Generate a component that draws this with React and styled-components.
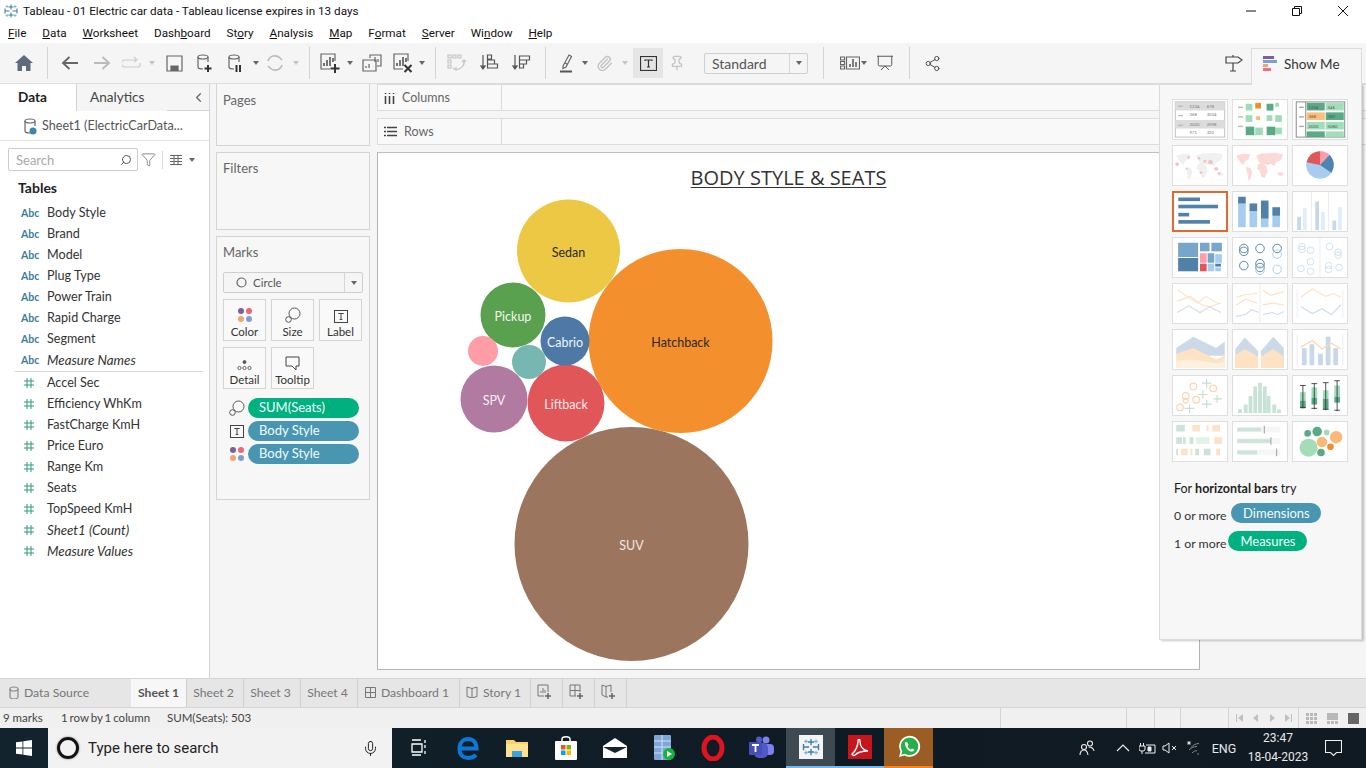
import styled, { createGlobalStyle } from "styled-components";
import { Search, Filter, ChevronLeft, Share2, Mic, Presentation, Paperclip, Pin } from "lucide-react";

const UI = `Lato, "Open Sans", sans-serif`;
const SEGOE = `Roboto, "Open Sans", sans-serif`;

const GlobalStyle = createGlobalStyle`
  html, body { margin: 0; padding: 0; background: #fff; }
  * { box-sizing: border-box; }
`;

const Page = styled.div`
  position: relative;
  width: 1366px;
  height: 768px;
  overflow: hidden;
  display: flex;
  flex-direction: column;
  font-family: ${UI};
  color: #333;
`;

const TitleBar = styled.div`
  height: 22px;
  display: flex;
  align-items: center;
  padding-left: 3px;
  background: #fff;
  font-family: ${SEGOE};
  font-size: 11.7px;
  color: #111;
  gap: 4px;
`;

const WindowButtons = styled.div`
  margin-left: auto;
  display: flex;
  align-items: center;
`;

const WindowButton = styled.div`
  width: 46px;
  height: 22px;
  display: flex;
  align-items: center;
  justify-content: center;
`;

const MenuBar = styled.div`
  height: 21px;
  display: flex;
  align-items: center;
  padding-left: 8px;
  gap: 16px;
  background: #fff;
  font-family: ${SEGOE};
  font-size: 11.7px;
  color: #111;
  u { text-underline-offset: 1px; }
`;

const Toolbar = styled.div`
  height: 41px;
  flex: none;
  display: flex;
  align-items: center;
  padding: 0 117px 0 8px;
  background: #f5f5f5;
  border-bottom: 1px solid #dcdcdc;
`;

const Tool = styled.div`
  width: ${(p) => p.$w}px;
  height: 30px;
  flex: none;
  display: flex;
  align-items: center;
  justify-content: center;
  background: ${(p) => (p.$active ? "#e5e5e5" : "transparent")};
`;

const Sep = styled.div`
  width: 1px;
  height: 32px;
  flex: none;
  margin: 0 ${(p) => p.$r}px 0 ${(p) => p.$l}px;
  background: #d4d4d4;
`;

const Caret = styled.div`
  width: 0;
  height: 0;
  border-left: 3.5px solid transparent;
  border-right: 3.5px solid transparent;
  border-top: 4px solid ${(p) => (p.$faded ? "#c4c4c4" : "#666")};
`;

const Select = styled.div`
  height: ${(p) => p.$h}px;
  width: ${(p) => p.$w}px;
  flex: none;
  margin-left: ${(p) => p.$ml || 0}px;
  display: flex;
  align-items: center;
  background: #f5f5f5;
  border: 1px solid #cfcfcf;
  border-radius: 2px;
  font-size: ${(p) => p.$size}px;
  color: #555;
`;

const SelectLabel = styled.div`
  flex: 1;
  display: flex;
  align-items: center;
  gap: 6px;
  padding-left: ${(p) => p.$pl}px;
`;

const SelectArrow = styled.div`
  width: 18px;
  height: 100%;
  display: flex;
  align-items: center;
  justify-content: center;
  border-left: 1px solid #d6d6d6;
`;

const Spring = styled.div`
  flex: 1;
`;

const Main = styled.div`
  height: 594px;
  flex: none;
  display: flex;
  background: #f5f5f5;
`;

const DataPane = styled.div`
  width: 210px;
  flex: none;
  background: #fff;
  border-right: 1px solid #d4d4d4;
  display: flex;
  flex-direction: column;
`;

const PaneTabs = styled.div`
  height: 27px;
  display: flex;
  align-items: center;
  border-bottom: 1px solid #d4d4d4;
  font-size: 13.6px;
  line-height: 24px;
`;

const PaneTab = styled.div`
  width: ${(p) => p.$w}px;
  height: 27px;
  display: flex;
  align-items: center;
  padding-bottom: 1px;
  background: ${(p) => (p.$active ? "#fff" : "#f5f5f5")};
  margin-bottom: ${(p) => (p.$active ? "-1px" : "0")};
  padding-left: ${(p) => p.$pl}px;
  font-weight: ${(p) => (p.$active ? 700 : 400)};
  color: ${(p) => (p.$active ? "#222" : "#444")};
  border-right: ${(p) => (p.$active ? "1px solid #d4d4d4" : "none")};
`;

const CollapseBox = styled.div`
  flex: 1;
  height: 26px;
  background: #f5f5f5;
  display: flex;
  align-items: center;
  justify-content: flex-end;
  padding-right: 3px;
`;

const SourceRow = styled.div`
  height: 30px;
  display: flex;
  align-items: center;
  gap: 5px;
  padding-left: 23px;
  font-size: 12.6px;
  color: #555;
  border-bottom: 1px solid #e2e2e2;
`;

const SearchRow = styled.div`
  height: 35px;
  display: flex;
  align-items: center;
  padding: 2px 0 0 8px;
`;

const SearchBox = styled.div`
  width: 130px;
  height: 23px;
  display: flex;
  align-items: center;
  justify-content: space-between;
  padding: 0 5px 0 7px;
  border: 1px solid #ccc;
  border-radius: 2px;
  font-size: 13px;
  color: #aaa;
`;

const SearchTools = styled.div`
  display: flex;
  align-items: center;
  gap: 6px;
  margin-left: 3px;
`;

const VRule = styled.div`
  width: 1px;
  height: 18px;
  background: #dcdcdc;
`;

const TablesHead = styled.div`
  height: 20px;
  margin-top: 1px;
  padding-left: 18px;
  font-size: 14px;
  font-weight: 700;
  color: #222;
  display: flex;
  align-items: center;
`;

const FieldList = styled.div`
  padding-top: 5px;
`;

const FieldRow = styled.div`
  height: 21px;
  display: flex;
  align-items: center;
  font-size: ${(p) => (p.$calc ? 13.3 : 12.6)}px;
  color: #333;
  font-style: ${(p) => (p.$calc ? "italic" : "normal")};
`;

const FieldType = styled.span`
  width: 47px;
  flex: none;
  display: flex;
  padding-left: ${(p) => (p.$num ? 23 : 21)}px;
  font-size: 10.5px;
  font-style: normal;
  font-weight: 700;
  color: #3d7d9c;
`;

const FieldRule = styled.div`
  height: 1px;
  margin: 1px 6px 0 15px;
  background: #d8d8d8;
`;

const CardsColumn = styled.div`
  width: 166px;
  flex: none;
  padding: 0 6px 0 6px;
  display: flex;
  flex-direction: column;
  gap: 6px;
`;

const Card = styled.div`
  height: ${(p) => p.$h}px;
  flex: none;
  padding: ${(p) => (p.$flush ? 8 : 7)}px 6px 0 6px;
  background: #f7f7f7;
  border: 1px solid #d4d4d4;
  border-top: ${(p) => (p.$flush ? "none" : "1px solid #d4d4d4")};
  font-size: 13px;
  color: #666;
`;

const MarksType = styled.div`
  margin-top: 12px;
`;

const MarkGrid = styled.div`
  display: grid;
  grid-template-columns: repeat(3, 43px);
  grid-auto-rows: 42px;
  column-gap: 5px;
  row-gap: 6px;
  margin-top: 6px;
`;

const MarkButton = styled.div`
  background: #f9f9f9;
  border: 1px solid #d4d4d4;
  display: flex;
  flex-direction: column;
  align-items: center;
  justify-content: flex-end;
  gap: 2px;
  padding-bottom: 2px;
  font-size: 11.5px;
  color: #333;
`;

const PillList = styled.div`
  display: flex;
  flex-direction: column;
  gap: 3px;
  margin-top: 9px;
`;

const PillRow = styled.div`
  display: flex;
  align-items: center;
  height: 20px;
  gap: 3px;
  padding-left: 6px;
`;

const PillIcon = styled.div`
  width: 16px;
  display: flex;
  justify-content: center;
`;

const Pill = styled.div`
  width: ${(p) => p.$w || 111}px;
  height: 20px;
  border-radius: 10px;
  display: flex;
  align-items: center;
  padding: 0 0 2px 11px;
  font-size: 13px;
  color: #f2fbff;
  background: ${(p) => (p.$measure ? "#00b180" : "#4996b2")};
`;

const VizColumn = styled.div`
  flex: 1;
  display: flex;
  flex-direction: column;
  padding-left: 1px;
`;

const Shelf = styled.div`
  height: 27px;
  flex: none;
  margin-bottom: ${(p) => p.$mb}px;
  background: #f9f9f9;
  border-top: 1px solid #dcdcdc;
  border-bottom: 1px solid #dcdcdc;
  border-left: 1px solid #dcdcdc;
`;

const ShelfLabel = styled.div`
  width: 124px;
  height: 100%;
  display: flex;
  align-items: center;
  gap: ${(p) => p.$gap}px;
  padding-left: 6px;
  border-right: 1px solid #dcdcdc;
  font-size: 12.5px;
  color: #666;
`;

const Canvas = styled.div`
  width: 823px;
  height: 518px;
  flex: none;
  background: #fff;
  border: 1px solid #b4b4b4;
  border-top-color: #c0c0c0;
`;

const ChartTitle = styled.div`
  height: 38px;
  padding: 13px 0 0 0;
  text-align: center;
  font-family: "Open Sans", sans-serif;
  font-size: 20px;
  font-weight: 500;
  line-height: 24px;
  text-decoration: underline;
  text-decoration-thickness: 1px;
  text-underline-offset: 2px;
  color: #333;
`;

const Chart = styled.svg`
  display: block;
  width: 821px;
  height: 478px;
  font-family: ${UI};
`;

const ShowMeTab = styled.div`
  position: absolute;
  left: 1251px;
  top: 48px;
  width: 111px;
  height: 37px;
  z-index: 3;
  background: #f7f7f7;
  border: 1px solid #dcdcdc;
  border-bottom: none;
  display: flex;
  align-items: center;
  gap: 6px;
  padding: 0 0 7px 11px;
  font-size: 13.5px;
  color: #333;
`;

const ShowMePanel = styled.div`
  position: absolute;
  left: 1159px;
  top: 84px;
  width: 203px;
  height: 556px;
  z-index: 2;
  padding: 14px 0 0 12px;
  background: #f7f7f7;
  border: 1px solid #dcdcdc;
  box-shadow: 2px 1px 2px rgba(0, 0, 0, 0.22);
`;

const ThumbGrid = styled.div`
  display: grid;
  grid-template-columns: repeat(3, 56px);
  grid-auto-rows: 41px;
  column-gap: 4px;
  row-gap: 5px;
`;

const Thumb = styled.div`
  background: #fff;
  border: ${(p) => (p.$active ? "2px solid #e0692f" : "1px solid #dedede")};
  overflow: hidden;
  svg {
    display: block;
    width: 100%;
    height: 100%;
  }
`;

const HintTitle = styled.div`
  margin: 19px 0 0 2px;
  height: 16px;
  font-size: 12.5px;
  color: #222;
`;

const HintRow = styled.div`
  display: flex;
  align-items: center;
  margin: ${(p) => p.$mt}px 0 0 2px;
  height: 20px;
  gap: ${(p) => p.$gap}px;
  font-size: 12.3px;
  color: #333;
`;

const HintPill = styled(Pill)`
  justify-content: center;
  padding: 0 0 1px 0;
  margin-bottom: 4px;
`;

const SheetTabs = styled.div`
  height: 30px;
  flex: none;
  display: flex;
  background: #e6e6e6;
  border-top: 1px solid #d4d4d4;
  border-bottom: 1px solid #d4d4d4;
  font-size: 12.2px;
  color: #777;
`;

const SheetTab = styled.div`
  width: ${(p) => p.$w}px;
  display: flex;
  align-items: center;
  justify-content: ${(p) => (p.$plain ? "flex-start" : "center")};
  padding: ${(p) => (p.$plain ? "0 0 2px 9px" : p.$active ? "0 0 2px 0" : "0 3px 2px 0")};
  gap: 5px;
  flex: none;
  background: ${(p) => (p.$active ? "#f7f7f7" : "transparent")};
  font-weight: ${(p) => (p.$active ? 700 : 400)};
  color: ${(p) => (p.$active ? "#555" : "#777")};
  border-right: ${(p) => (p.$plain ? "none" : "1px solid #d0d0d0")};
`;

const StatusBar = styled.div`
  height: 20px;
  flex: none;
  display: flex;
  align-items: center;
  background: #f0f0f0;
  font-size: 11.5px;
  color: #444;
`;

const StatusText = styled.div`
  width: ${(p) => p.$w}px;
  flex: none;
  padding-left: ${(p) => p.$pl}px;
  padding-bottom: 2px;
  word-spacing: ${(p) => p.$ws || 0}px;
`;

const StatusCell = styled.div`
  width: ${(p) => p.$w}px;
  height: 100%;
  flex: none;
  display: flex;
  align-items: center;
  justify-content: center;
  gap: ${(p) => p.$gap || 0}px;
  border-left: 1px solid #d4d4d4;
`;

const Taskbar = styled.div`
  height: 40px;
  flex: none;
  display: flex;
  align-items: center;
  background: linear-gradient(90deg, #13232d, #0f1b24 60%, #101a22);
  color: #fff;
`;

const StartButton = styled.div`
  width: 48px;
  height: 40px;
  flex: none;
  display: flex;
  align-items: center;
  justify-content: center;
`;

const SearchBar = styled.div`
  width: 344px;
  height: 40px;
  flex: none;
  display: flex;
  align-items: center;
  padding: 0 13px 0 9px;
  background: #f2f2f2;
  color: #222;
  font-family: ${SEGOE};
  font-size: 15px;
`;

const SearchRing = styled.div`
  width: 22px;
  height: 22px;
  border-radius: 50%;
  border: 3px solid #111;
  margin-right: 9px;
  box-shadow: 0 0 2px #666;
`;

const SearchText = styled.div`
  flex: 1;
`;

const AppIcons = styled.div`
  display: flex;
  height: 40px;
  margin-left: 2px;
`;

const AppIcon = styled.div`
  width: 49px;
  height: 40px;
  flex: none;
  display: flex;
  align-items: center;
  justify-content: center;
  background: ${(p) => p.$bg || "transparent"};
  border-bottom: ${(p) => (p.$line ? `2px solid ${p.$line}` : "none")};
`;

const Tray = styled.div`
  margin-left: auto;
  display: flex;
  align-items: center;
  height: 40px;
  padding-right: 16px;
`;

const TrayItem = styled.div`
  width: ${(p) => p.$w}px;
  flex: none;
  display: flex;
  align-items: center;
  justify-content: center;
  font-family: ${SEGOE};
  font-size: 12.5px;
  color: #e8e8e8;
`;

const Clock = styled.div`
  width: 60px;
  flex: none;
  margin: 0 8px 0 5px;
  white-space: nowrap;
  display: flex;
  flex-direction: column;
  align-items: center;
  font-family: ${SEGOE};
  font-size: 12px;
  line-height: 19px;
  color: #e8e8e8;
`;

const I = ({ w = 20, h = 20, children, stroke = "#666", sw = 1.2 }) => (
  <svg width={w} height={h} viewBox={`0 0 ${w} ${h}`} fill="none" stroke={stroke} strokeWidth={sw}>
    {children}
  </svg>
);

const Cylinder = ({ c = "#666" }) => (
  <>
    <ellipse cx="7" cy="4" rx="5" ry="2" stroke={c} />
    <path d="M2 4v10c0 1.2 2 2 5 2M12 4v5" stroke={c} />
  </>
);

const TableauLogo = ({ size = 16 }) => (
  <svg width={size} height={size} viewBox="0 0 16 16" stroke="#3a7fae" strokeWidth="1.1">
    <path d="M8 1.5v5M5.5 4h5M8 9.5v5M5.5 12h5M1.5 8h5M2 5.5v5M9.5 8h5M14 5.5v5" />
    <path d="M4 2v3M2.5 3.5h3M12 2v3M10.5 3.5h3M4 11v3M2.5 12.5h3M12 11v3M10.5 12.5h3" stroke="#7fb2d2" strokeWidth=".9" />
  </svg>
);

const ColorDots = ({ scale = 1 }) => (
  <svg width={16 * scale} height={16 * scale} viewBox="0 0 16 16">
    <circle cx="4" cy="4" r="3" fill="#7b6195" />
    <circle cx="12" cy="4" r="3" fill="#f0647a" />
    <circle cx="4" cy="12" r="3" fill="#f5a46f" />
    <circle cx="12" cy="12" r="3" fill="#7d9fcd" />
  </svg>
);

const SizeIcon = () => (
  <svg width="16" height="16" viewBox="0 0 16 16" fill="none" stroke="#555">
    <circle cx="9.5" cy="6.5" r="5.5" fill="#f9f9f9" />
    <circle cx="3.5" cy="12.5" r="2.8" fill="#f9f9f9" />
  </svg>
);

const TextBox = () => (
  <svg width="14" height="13" viewBox="0 0 14 13" fill="none" stroke="#444">
    <rect x=".5" y=".5" width="13" height="12" />
    <path d="M4.5 4V3.5h5V4M7 3.5v6M5.7 9.5h2.6" />
  </svg>
);

const BarChartSmall = ({ children }) => (
  <I w={22} h={22}>
    <path d="M16 9V2H2v15h9" />
    <path d="M5 14v-3M8 14V8M11 14V5M14 10V6" strokeWidth="1.6" stroke="#555" />
    {children}
  </I>
);

const SortIcon = ({ rev }) => (
  <I w={20} h={20} stroke="#555">
    <path d="M4 2v13M1.5 12.5L4 16l2.5-3.5" fill="#555" />
    {rev ? (
      <path d="M8.5 3h10v4h-10zM8.5 7h7v4h-7zM8.5 11h4v4h-4z" />
    ) : (
      <path d="M8.5 2h4v4h-4zM8.5 7h7v4h-7zM8.5 11h10v4h-10z" />
    )}
  </I>
);

const HashIcon = () => (
  <svg width="12" height="12" viewBox="0 0 12 12" stroke="#2f9b78" strokeWidth="1">
    <path d="M4 1v10M8 1v10M1 4h10M1 8h10" />
  </svg>
);

const circles = [
  { name: "SUV", cx: 631.5, cy: 544, r: 117, fill: "#9c755f", text: "#f0e8e0" },
  { name: "Hatchback", cx: 680.5, cy: 341, r: 92, fill: "#f48f2d", text: "#2a2a2a" },
  { name: "Sedan", cx: 568.5, cy: 251, r: 51.5, fill: "#ecc845", text: "#2a2a2a" },
  { name: "Liftback", cx: 566, cy: 403, r: 38.5, fill: "#e15759", text: "#f8e8e8" },
  { name: "SPV", cx: 494, cy: 399, r: 33.5, fill: "#b07aa1", text: "#f8eef6" },
  { name: "Pickup", cx: 513, cy: 315, r: 32.5, fill: "#59a14f", text: "#f0f8ee" },
  { name: "Cabrio", cx: 565, cy: 341, r: 24.5, fill: "#4e79a7", text: "#eef4fa" },
  { name: "", cx: 529, cy: 362, r: 17, fill: "#76b7b2", text: "#fff" },
  { name: "", cx: 483, cy: 351, r: 15, fill: "#ff9da7", text: "#fff" },
];

const Bars = ({ items, fill, op = 1 }) =>
  items.map(([x, y, w, h, f], i) => <rect key={i} x={x} y={y} width={w} height={h} fill={f || fill} opacity={op} />);

const Poly = ({ d, c, sw = 1.2, op = 1 }) => <path d={d} fill="none" stroke={c} strokeWidth={sw} opacity={op} />;

const Rings = ({ items, c, sw = 1, op = 1 }) =>
  items.map(([x, y, r], i) => <circle key={i} cx={x} cy={y} r={r} fill="none" stroke={c} strokeWidth={sw} opacity={op} />);

const WORLD = "M3 10l8-2 7 1-2 5-4 2-1 4-3-2-3-4zM13 22l5 1 2 4-2 7-2 3-1-7zM24 10l6-2 14-1 8 2-2 6-5 2-2 4-4-2-3 1-4-1-4 0zM26 19l6 0 3 3 1 5-3 6-3 0-2-6-3-3zM46 28l5-1 2 3-4 2z";

const tableCells = (
  <>
    <rect x="2" y="2" width="52" height="37" fill="none" stroke="#bbb" />
    <Bars fill="#dcdcdc" items={[[2, 2, 52, 9], [2, 21, 52, 9]]} />
    <Bars fill="#aaa" items={[[5, 6, 5, 1], [5, 16, 5, 1], [5, 26, 5, 1]]} />
    {[[17, 8, "1234"], [35, 8, "678"], [17, 17, "368"], [35, 17, "3034"], [17, 27, "2020"], [35, 27, "2598"], [17, 36, "971"], [35, 36, "322"]].map(([x, y, t]) => (
      <text key={t} x={x} y={y} fontSize="4.5" fill="#777" fontFamily="Lato">{t}</text>
    ))}
  </>
);

const thumbs = [
  tableCells,
  <>
    <Bars fill="#bbb" items={[[5, 7, 5, 1.5], [5, 17, 5, 1.5], [5, 27, 5, 1.5]]} />
    <Bars fill="#9fdcb8" items={[[13, 4, 7, 7], [35, 4, 7, 7], [44, 3, 4, 4], [13, 16, 7, 7], [35, 16, 6, 6], [44, 16, 7, 7], [23, 29, 8, 8], [44, 29, 7, 7]]} />
    <Bars fill="#f28e2b" items={[[23, 3, 6, 6]]} />
    <Bars fill="#fdb877" items={[[24, 17, 4, 4]]} />
    <Bars fill="#59ab85" items={[[35, 4, 7, 7], [13, 28, 9, 9], [35, 28, 9, 9]]} />
  </>,
  <>
    <rect x="3" y="2" width="51" height="37" fill="none" stroke="#888" />
    <line x1="13" y1="2" x2="13" y2="39" stroke="#888" />
    <Bars fill="#aaa" items={[[6, 7, 5, 1.5], [6, 17, 5, 1.5], [6, 27, 5, 1.5]]} />
    <Bars fill="#58ab86" items={[[14, 3, 19, 8], [34, 13, 19, 8], [14, 33, 19, 6]]} />
    <Bars fill="#a3debb" items={[[34, 3, 19, 8], [14, 23, 19, 8], [34, 23, 19, 8], [34, 33, 19, 6]]} />
    <Bars fill="#fdbd7d" items={[[14, 13, 19, 8]]} />
    {[[16, 9, "1234"], [36, 9, "546"], [16, 19, "368"], [36, 19, "380"], [16, 29, "2020"], [36, 29, "5080"]].map(([x, y, t]) => (
      <text key={t} x={x} y={y} fontSize="4.5" fill="#555" fontFamily="Lato">{t}</text>
    ))}
  </>,
  <>
    <path d={WORLD} fill="#f0f0f0" />
    {[[4, 19, 2], [16, 12, 1.5], [27, 13, 1.5], [39, 17, 2.5], [29, 28, 1.5], [45, 24, 2], [48, 29, 1.5], [14, 24, 1.2], [33, 16, 1.5]].map(([x, y, r], i) => (
      <circle key={i} cx={x} cy={y} r={r} fill="#f3c3c6" />
    ))}
  </>,
  <path d={WORLD} fill="#fbd9d6" />,
  <>
    <circle cx="28" cy="20" r="14.5" fill="#a6cdee" />
    <path d="M28 20L14 17a14.5 14.5 0 0 1 14-11.5z" fill="#e15759" />
    <path d="M28 20V5.5a14.5 14.5 0 0 1 10 4z" fill="#ff9da7" />
    <path d="M28 20L38 9.5a14.5 14.5 0 0 1 2 18.5z" fill="#4e85b0" />
  </>,
  <Bars fill="#4f81a9" items={[[4, 5, 24, 4], [4, 13, 44, 4], [4, 22, 12, 4], [4, 30, 35, 4]]} />,
  <>
    <Bars fill="#a6cdee" items={[[5, 11, 8, 26], [17, 19, 8, 18], [29, 28, 8, 9], [41, 25, 8, 12]]} />
    <Bars fill="#4f81a9" items={[[5, 5, 8, 7], [17, 12, 8, 8], [29, 9, 8, 19], [41, 16, 8, 9]]} />
  </>,
  <>
    <Poly d="M19 0v41M37 0v41" c="#eee" />
    <Bars fill="#c9d8e8" items={[[4, 26, 4, 14], [23, 10, 4, 30], [41, 30, 4, 10]]} />
    <Bars fill="#e0edfa" items={[[10, 17, 4, 23], [29, 21, 4, 19], [47, 16, 4, 24]]} />
  </>,
  <>
    <Bars fill="#78a6c8" items={[[5, 5, 21, 15], [28, 5, 10, 9], [40, 5, 11, 9]]} />
    <Bars fill="#4f81a9" items={[[5, 21, 21, 14], [44, 27, 6, 3]]} />
    <Bars fill="#a6cdee" items={[[44, 17, 7, 9], [36, 27, 7, 8], [44, 31, 6, 4]]} />
    <Bars fill="#ff9da7" items={[[28, 16, 7, 10]]} />
    <Bars fill="#78a6c8" items={[[36, 16, 7, 10]]} />
    <Bars fill="#e15759" items={[[28, 27, 7, 8]]} />
  </>,
  <>
    <Rings c="#4f81a9" items={[[11, 11, 4.5], [11, 14, 4.5], [28, 11, 4.5], [28, 27, 4.5], [28, 31, 4.5], [11, 29, 4.5], [46, 11, 4.5]]} />
    <Rings c="#a6cdee" items={[[46, 17, 4.5], [46, 33, 4.5], [28, 34, 4.5]]} />
  </>,
  <>
    <Poly d="M28 0v41" c="#eef2f6" />
    <Rings c="#cfe0ee" items={[[9, 9, 3.5], [9, 12, 3.5], [18, 13, 3.5], [18, 25, 3.5], [8, 32, 3.5], [18, 35, 3.5], [38, 9, 3.5], [47, 15, 3.5], [47, 18, 3.5], [37, 29, 3.5], [37, 33, 3.5], [48, 31, 3.5]]} />
  </>,
  <>
    <Poly d="M4 6l12 8 10 6 8-7 14 8" c="#fde4c8" />
    <Poly d="M4 18l14-5 12 9 8 2 12-4" c="#fde4c8" />
    <Poly d="M4 30l12-7 12 7 10-6 12 6" c="#cfdcea" />
  </>,
  <>
    <Poly d="M28 0v41" c="#eee" />
    <Poly d="M3 14l10-3 12-1M3 22l10-6 12 4" c="#fde0c0" />
    <Poly d="M3 34l10-2 6-5 8 3" c="#cfdcea" />
    <Poly d="M31 6l8 6 14-4M31 22l10-2 12 2" c="#fde0c0" />
    <Poly d="M31 32l10-2 6 2 6-3" c="#cfdcea" />
  </>,
  <>
    <Poly d="M4 6v30M52 6v30" c="#f0f0f0" />
    <Poly d="M8 14l12-9 14 8 8-3 8 4" c="#fde4c8" />
    <Poly d="M8 24l12 7 10-5 10 6 10-10" c="#cfdcea" />
  </>,
  <>
    <path d="M3 19l18-12 24 12 9-7v15H3z" fill="#cbd9e8" />
    <path d="M3 25l18-6 24 12 9-4v13H3z" fill="#fde2c4" />
    <path d="M3 32l18-1 24 4 9-2v7H3z" fill="#fef0e0" />
  </>,
  <>
    <path d="M2 20l10-12 14 14v18H2z M29 22l13-15 11 12v21H29z" fill="#cbd9e8" />
    <path d="M2 26l10-6 14 8v12H2z M29 28l13-8 11 8v12H29z" fill="#fde2c4" />
  </>,
  <>
    <Bars fill="#c9d8e8" items={[[9, 19, 5, 18], [17, 15, 5, 22], [26, 25, 5, 12], [34, 7, 5, 30], [42, 19, 5, 18]]} />
    <Poly d="M8 18l12-7 10 9 10-6 10 6" c="#fdd9b0" sw="1.3" />
    <Poly d="M4 5v32M52 5v32" c="#efefef" />
  </>,
  <>
    <Rings c="#fdd5b0" sw="1.3" items={[[21, 11, 3.5], [13, 21, 3.5], [42, 13, 3.5], [7, 33, 3.5], [24, 25, 3.5], [13, 26, 2.5]]} />
    <Poly d="M35 3v9M30 7.5h10M31 15v9M26 19.5h10M46 20v8M42 24h9M35 25v9M30 29.5h10M17 30v9M12 34h10" c="#bfe0d2" />
  </>,
  <Bars fill="#c6e3d5" items={[[5, 35, 4, 4], [11, 30, 4, 9], [16, 21, 4, 18], [21, 11, 4, 28], [26, 7, 4, 32], [31, 11, 4, 28], [35, 21, 4, 18], [41, 30, 4, 9], [46, 35, 4, 4]]} />,
  <>
    <Bars fill="#9fdcb8" items={[[7, 17, 6, 9], [19, 12, 6, 11], [31, 15, 6, 9], [43, 10, 6, 12]]} />
    <Bars fill="#59ab85" items={[[7, 26, 6, 8], [19, 23, 6, 7], [31, 24, 6, 11], [43, 22, 6, 6]]} />
    <Poly d="M10 10v24M7 10h6M7 33h6M22 8v27M19 8h6M19 34h6M34 7v29M31 7h6M31 35h6M46 5v32M43 5h6M43 36h6" c="#333" sw=".9" />
  </>,
  <Bars
    items={[
      [3, 3, 9, 7, "#cce4d8"], [20, 3, 4, 7, "#fde2c8"], [24, 3, 4, 7, "#fde2c8"], [35, 3, 2, 7, "#fde2c8"], [41, 3, 8, 7, "#fde2c8"],
      [3, 16, 6, 7, "#cce4d8"], [10, 16, 3, 7, "#cce4d8"], [17, 16, 4, 7, "#cce4d8"], [24, 16, 14, 7, "#e2f2e9"], [43, 16, 8, 7, "#fde2c8"],
      [3, 28, 2, 7, "#cce4d8"], [8, 28, 7, 7, "#fde2c8"], [18, 28, 2, 7, "#fde2c8"], [23, 28, 4, 7, "#cce4d8"], [32, 28, 7, 7, "#cce4d8"], [45, 28, 4, 7, "#fde2c8"],
    ]}
  />,
  <>
    <Bars fill="#f6f6f6" items={[[4, 5, 45, 6], [4, 17, 45, 6], [4, 29, 45, 6]]} />
    <Bars fill="#cce4d8" items={[[4, 6, 25, 4], [4, 18, 35, 4], [4, 30, 21, 4]]} />
    <Bars fill="#999" items={[[32, 4, 1, 8], [39, 16, 1, 8], [45, 28, 1, 8]]} />
  </>,
  <>
    <circle cx="16" cy="27" r="9.5" fill="#a4dcb9" />
    <circle cx="15" cy="12" r="3.5" fill="#59ab85" />
    <circle cx="25" cy="10" r="5" fill="#59ab85" />
    <circle cx="35" cy="11" r="3" fill="#a4dcb9" />
    <circle cx="45" cy="16" r="6.5" fill="#fdb877" />
    <circle cx="30" cy="21" r="5.5" fill="#fdb877" />
    <circle cx="39" cy="26" r="3.5" fill="#f28e2b" />
    <circle cx="29" cy="32" r="4" fill="#59ab85" />
  </>,
];

const fields = [
  ["Body Style"], ["Brand"], ["Model"], ["Plug Type"], ["Power Train"], ["Rapid Charge"], ["Segment"], ["Measure Names", true],
];
const measures = [
  ["Accel Sec"], ["Efficiency WhKm"], ["FastCharge KmH"], ["Price Euro"], ["Range Km"], ["Seats"], ["TopSpeed KmH"], ["Sheet1 (Count)", true], ["Measure Values", true],
];

const App = () => (
  <Page>
    <GlobalStyle />
    <TitleBar>
      <TableauLogo />
      <span>Tableau - 01 Electric car data - Tableau license expires in 13 days</span>
      <WindowButtons>
        <WindowButton><I w={12} h={12} stroke="#111" sw={1}><path d="M1 6h10" /></I></WindowButton>
        <WindowButton><I w={12} h={12} stroke="#111" sw={1}><path d="M1.5 3.5h7v7h-7zM3.5 3V1.5h7v7H9" /></I></WindowButton>
        <WindowButton><I w={12} h={12} stroke="#111" sw={1}><path d="M1 1l10 10M11 1L1 11" /></I></WindowButton>
      </WindowButtons>
    </TitleBar>
    <MenuBar>
      <span><u>F</u>ile</span><span><u>D</u>ata</span><span><u>W</u>orksheet</span><span>Dash<u>b</u>oard</span><span>St<u>o</u>ry</span><span><u>A</u>nalysis</span><span><u>M</u>ap</span><span>F<u>o</u>rmat</span><span><u>S</u>erver</span><span>Wi<u>n</u>dow</span><span><u>H</u>elp</span>
    </MenuBar>
    <Toolbar>
      <Tool $w={32}>
        <svg width="18" height="16" viewBox="0 0 18 16"><path d="M9 0L0 8h2.5v8H7v-5h4v5h4.5V8H18z" fill="#5f6b7a" /></svg>
      </Tool>
      <Sep $l={7} $r={7} />
      <Tool $w={30}><I w={18} h={16} stroke="#666" sw={1.9}><path d="M17 8H2M8.5 2L2 8l6.5 6" /></I></Tool>
      <Tool $w={34}><I w={18} h={16} stroke="#bbb" sw={1.9}><path d="M1 8h15M9.5 2L16 8l-6.5 6" /></I></Tool>
      <Tool $w={26}><I w={20} h={14} stroke="#ccc"><path d="M14 4H3a2 2 0 0 0 0 7h13a2 2 0 0 0 2-2V7M12 1l3 3-3 2" /></I></Tool>
      <Tool $w={14}><Caret $faded /></Tool>
      <Tool $w={30}><I w={17} h={17}><path d="M1 1h15v15H1z" /><path d="M5 16v-5h7v5" fill="#666" /></I></Tool>
      <Tool $w={32}><I w={18} h={20}><Cylinder /><path d="M12 12v7M8.5 15.5h7" stroke="#333" strokeWidth="2" /></I></Tool>
      <Tool $w={30}><I w={18} h={20}><Cylinder /><path d="M9.5 12v7M13 12v7" stroke="#333" strokeWidth="2" /></I></Tool>
      <Tool $w={10}><Caret /></Tool>
      <Tool $w={28}><I w={18} h={18} stroke="#bbb" sw={1.6}><path d="M2 7a7.2 7.2 0 0 1 12-3l2 2M16 11a7.2 7.2 0 0 1-12 3l-2-2" /></I></Tool>
      <Tool $w={14}><Caret $faded /></Tool>
      <Sep $l={6} $r={6} />
      <Tool $w={28}><BarChartSmall><path d="M16 12v9M11.5 16.5h9" stroke="#333" strokeWidth="2" /></BarChartSmall></Tool>
      <Tool $w={12}><Caret /></Tool>
      <Tool $w={32}><I w={20} h={18}><path d="M8 4V1h11v11h-4" /><path d="M1 6h13v11H1z" fill="#f5f5f5" /><path d="M13 8V3M16 8V5M4 14v-2M7 14v-4" /></I></Tool>
      <Tool $w={30}><BarChartSmall><path d="M12.5 13l7 7M19.5 13l-7 7" stroke="#333" strokeWidth="2" /></BarChartSmall></Tool>
      <Tool $w={8}><Caret /></Tool>
      <Sep $l={9} $r={8} />
      <Tool $w={26}><I w={20} h={18} stroke="#c4c4c4"><path d="M1 1h3v3H1zM6 1h3v3H6zM11 1h3v3h-3zM1 6h3v3H1zM1 11h3v3H1z" /><path d="M17 6c1 5-2 9-8 10M6 14l3 2 0-3M15 8l2-2 2 2" /></I></Tool>
      <Tool $w={38}><SortIcon /></Tool>
      <Tool $w={26}><SortIcon rev /></Tool>
      <Sep $l={11} $r={10} />
      <Tool $w={22}><I w={14} h={20}><path d="M3 13L9 2l2.5 1.5L6 14l-3 1.5zM7 11l-2-1" /><path d="M0 18.500h12" stroke="#555" strokeWidth="2" /></I></Tool>
      <Tool $w={14}><Caret /></Tool>
      <Tool $w={24}><Paperclip size={17} color="#c4c4c4" /></Tool>
      <Tool $w={17}><Caret $faded /></Tool>
      <Tool $w={30} $active><I w={17} h={15} stroke="#333"><rect x=".5" y=".5" width="16" height="14" /><path d="M5 5V4h7v1M8.5 4v7M7 11h3" /></I></Tool>
      <Tool $w={28}><Pin size={16} color="#c4c4c4" /></Tool>
      <Select $w={104} $h={21} $ml={13} $size={14}>
        <SelectLabel $pl={7}>Standard</SelectLabel>
        <SelectArrow><Caret /></SelectArrow>
      </Select>
      <Sep $l={15} $r={16} />
      <Tool $w={20}><I w={20} h={14}><path d="M.5 1h4v3h-4zM.5 5.5h4v3h-4zM.5 10h4v3h-4zM6.5 1h13v12h-13z" /><path d="M10 11V8M13 11V3M16 11V6" stroke="#555" strokeWidth="1.5" /></I></Tool>
      <Tool $w={8}><Caret /></Tool>
      <Tool $w={34}><Presentation size={18} color="#555" strokeWidth={1.3} /></Tool>
      <Sep $l={7} $r={7} />
      <Tool $w={30}><Share2 size={17} color="#444" strokeWidth={1.3} /></Tool>
      <Spring />
      <Tool $w={30}><I w={18} h={18} stroke="#444"><path d="M1 3h12l4 3-4 3H1zM8 9v8M5 17h6M8 1v2" /></I></Tool>
    </Toolbar>

    <Main>
      <DataPane>
        <PaneTabs>
          <PaneTab $w={77} $active $pl={18}>Data</PaneTab>
          <PaneTab $w={90} $pl={13}>Analytics</PaneTab>
          <CollapseBox><ChevronLeft size={15} color="#666" /></CollapseBox>
        </PaneTabs>
        <SourceRow>
          <I w={14} h={18}><Cylinder /><circle cx="10" cy="14" r="3.5" fill="#3d86ad" stroke="none" /></I>
          Sheet1 (ElectricCarData...
        </SourceRow>
        <SearchRow>
          <SearchBox>Search<Search size={12} color="#555" style={{ transform: "scaleX(-1)" }} /></SearchBox>
          <SearchTools>
            <Filter size={15} color="#666" strokeWidth={1.2} />
            <VRule />
            <I w={14} h={12} stroke="#666" sw={1}><path d="M1 1.5h12M1 4.5h12M1 7.5h12M1 10.5h12M5 1v10M9 1v10" /></I>
            <Caret />
          </SearchTools>
        </SearchRow>
        <TablesHead>Tables</TablesHead>
        <FieldList>
          {fields.map(([name, calc]) => (
            <FieldRow key={name} $calc={calc}><FieldType>Abc</FieldType>{name}</FieldRow>
          ))}
          <FieldRule />
          {measures.map(([name, calc]) => (
            <FieldRow key={name} $calc={calc}><FieldType $num><HashIcon /></FieldType>{name}</FieldRow>
          ))}
        </FieldList>
      </DataPane>

      <CardsColumn>
        <Card $h={62} $flush>Pages</Card>
        <Card $h={78}>Filters</Card>
        <Card $h={264}>
          Marks
          <MarksType>
            <Select $w={140} $h={21} $size={11.5}>
              <SelectLabel $pl={12}>
                <I w={11} h={11}><circle cx="5.5" cy="5.5" r="4.5" /></I>
                Circle
              </SelectLabel>
              <SelectArrow><Caret /></SelectArrow>
            </Select>
          </MarksType>
          <MarkGrid>
            <MarkButton><ColorDots />Color</MarkButton>
            <MarkButton><SizeIcon />Size</MarkButton>
            <MarkButton><TextBox />Label</MarkButton>
            <MarkButton>
              <I w={15} h={12} stroke="#555" sw={0.9}><circle cx="7.5" cy="3" r="1.5" fill="#555" /><circle cx="2.5" cy="9" r="1.6" /><circle cx="7.5" cy="9" r="1.6" /><circle cx="12.5" cy="9" r="1.6" /></I>
              Detail
            </MarkButton>
            <MarkButton>
              <I w={15} h={15} stroke="#444" sw={1}><path d="M1 1h13v9h-3v4l-4-4H1z" /></I>
              Tooltip
            </MarkButton>
          </MarkGrid>
          <PillList>
            <PillRow><PillIcon><SizeIcon /></PillIcon><Pill $measure>SUM(Seats)</Pill></PillRow>
            <PillRow><PillIcon><TextBox /></PillIcon><Pill>Body Style</Pill></PillRow>
            <PillRow><PillIcon><ColorDots /></PillIcon><Pill>Body Style</Pill></PillRow>
          </PillList>
        </Card>
      </CardsColumn>

      <VizColumn>
        <Shelf $mb={7}>
          <ShelfLabel $gap={7}>
            <I w={11} h={12} stroke="#444" sw={1.6}><path d="M1.5 1v1M1.5 4v8M5.5 1v1M5.5 4v8M9.5 1v1M9.5 4v8" /></I>
            Columns
          </ShelfLabel>
        </Shelf>
        <Shelf $mb={7}>
          <ShelfLabel $gap={7}>
            <I w={13} h={11} stroke="#444" sw={1.4}><path d="M0 1.5h2M3 1.5h10M0 5.5h2M3 5.5h10M0 9.5h2M3 9.5h10" /></I>
            Rows
          </ShelfLabel>
        </Shelf>
        <Canvas>
          <ChartTitle>BODY STYLE &amp; SEATS</ChartTitle>
          <Chart viewBox="378 191 821 478">
            {circles.map((c) => (
              <g key={c.cx}>
                <circle cx={c.cx} cy={c.cy} r={c.r} fill={c.fill} />
                {c.name && (
                  <text x={c.cx} y={c.cy + 5.5} textAnchor="middle" fontSize="12.5" fill={c.text}>{c.name}</text>
                )}
              </g>
            ))}
          </Chart>
        </Canvas>
      </VizColumn>
    </Main>

    <ShowMeTab>
      <svg width="15" height="16" viewBox="0 0 15 16">
        <rect width="11" height="3" fill="#7b6195" />
        <rect y="4" width="14" height="3" fill="#7d9fcd" />
        <rect y="8" width="5" height="3" fill="#f5a46f" />
        <rect y="12" width="8" height="3" fill="#f9697f" />
      </svg>
      Show Me
    </ShowMeTab>
    <ShowMePanel>
      <ThumbGrid>
        {thumbs.map((t, i) => (
          <Thumb key={i} $active={i === 6}>
            <svg viewBox="0 0 56 41">{t}</svg>
          </Thumb>
        ))}
      </ThumbGrid>
      <HintTitle>For <b>horizontal bars</b> try</HintTitle>
      <HintRow $mt={8} $gap={5}>0 or more <HintPill $w={90}>Dimensions</HintPill></HintRow>
      <HintRow $mt={8} $gap={2}>1 or more <HintPill $w={79} $measure>Measures</HintPill></HintRow>
    </ShowMePanel>

    <SheetTabs>
      <SheetTab $w={131} $plain>
        <I w={10} h={13} stroke="#888"><ellipse cx="5" cy="3" rx="4" ry="2" /><path d="M1 3v8c0 1 2 2 4 2s4-1 4-2V3" /></I>
        Data Source
      </SheetTab>
      <SheetTab $w={56} $active>Sheet 1</SheetTab>
      <SheetTab $w={57}>Sheet 2</SheetTab>
      <SheetTab $w={57}>Sheet 3</SheetTab>
      <SheetTab $w={57}>Sheet 4</SheetTab>
      <SheetTab $w={102}>
        <I w={11} h={11} stroke="#777" sw={1}><path d="M.5.5h10v10H.5zM5.5.5v10M.5 5.5h10" /></I>
        Dashboard 1
      </SheetTab>
      <SheetTab $w={71}>
        <I w={12} h={12} stroke="#777" sw={1}><path d="M1 1l5 1.5L11 1v9.500L6 12 1 10.500zM6 2.500V12" /></I>
        Story 1
      </SheetTab>
      <SheetTab $w={32}><I w={16} h={16} stroke="#777" sw={1}><path d="M11 8V1H1v11h6M4 9V7M6 9V4M8 9V6" /><path d="M11 9v6M8 12h6" stroke="#666" strokeWidth="1.5" /></I></SheetTab>
      <SheetTab $w={32}><I w={16} h={16} stroke="#777" sw={1}><path d="M11 8V1H1v11h6M6 1v11M1 6.5h10" /><path d="M11 9v6M8 12h6" stroke="#666" strokeWidth="1.5" /></I></SheetTab>
      <SheetTab $w={32}><I w={16} h={16} stroke="#777" sw={1}><path d="M1 1l4 1.5L10 1v7M1 1v10l4 2h2M5 2.5V13" /><path d="M11 9v6M8 12h6" stroke="#666" strokeWidth="1.5" /></I></SheetTab>
    </SheetTabs>

    <StatusBar>
      <StatusText $w={61} $pl={3}>9 marks</StatusText>
      <StatusText $w={106} $pl={0} $ws={-1}>1 row by 1 column</StatusText>
      <StatusText $w={833} $pl={0}>SUM(Seats): 503</StatusText>
      <StatusCell $w={126} />
      <StatusCell $w={28} />
      <StatusCell $w={26} />
      <StatusCell $w={48} />
      <StatusCell $w={70}>
        <svg width="56" height="10" viewBox="0 0 56 10" fill="#c0c0c0">
          <path d="M0 1h1v8H0zM7 1v8L2 5zM22 1v8l-5-4zM34 1v8l5-4zM49 1v8l5-4zM55 1h1v8h-1z" />
        </svg>
      </StatusCell>
      <StatusCell $w={68} $gap={10}>
        <svg width="11" height="11" viewBox="0 0 11 11" fill="#b8b8b8"><path d="M0 0h3v3H0zM4 0h3v3H4zM8 0h3v3H8zM0 4h3v3H0zM4 4h3v3H4zM8 4h3v3H8zM0 8h3v3H0zM4 8h3v3H4zM8 8h3v3H8z" /></svg>
        <svg width="11" height="11" viewBox="0 0 11 11" fill="#b8b8b8"><path d="M0 0h11v7H0zM0 8h3v3H0zM4 8h3v3H4zM8 8h3v3H8z" /></svg>
        <svg width="11" height="11" viewBox="0 0 11 11" fill="#666"><rect width="11" height="11" /></svg>
      </StatusCell>
    </StatusBar>

    <Taskbar>
      <StartButton>
        <svg width="16" height="16" viewBox="0 0 16 16" fill="#fff"><path d="M0 2.3l6.5-.9v6.200H0zM7.3 1.300L16 0v7.600H7.300zM0 8.400h6.500v6.200L0 13.700zM7.300 8.400H16V16l-8.700-1.200z" /></svg>
      </StartButton>
      <SearchBar>
        <SearchRing />
        <SearchText>Type here to search</SearchText>
        <Mic size={17} color="#222" strokeWidth={1.4} />
      </SearchBar>
      <AppIcons>
        <AppIcon>
          <I w={18} h={18} stroke="#fff" sw={1.3}><path d="M2 1h9M2 16h9M2 5h10v8H2zM15 1v3M15 6v3M15 12v3" /></I>
        </AppIcon>
        <AppIcon>
          <svg width="22" height="24" viewBox="0 0 22 24" fill="none" stroke="#0a78d7" strokeWidth="4"><path d="M3 12.5h16.5C19.5 6 16 3 11 3 6 3 2.5 7 2.5 13c0 6 4 9 8.5 9 3.5 0 6-1 8-3" /></svg>
        </AppIcon>
        <AppIcon>
          <svg width="22" height="20" viewBox="0 0 22 20"><path d="M0 2h8l2 2h12v15H0z" fill="#f6d468" /><path d="M0 6h22v13H0z" fill="#ffe28f" /><path d="M6 19v-6h10v6z" fill="#3aa2e0" /></svg>
        </AppIcon>
        <AppIcon>
          <svg width="22" height="24" viewBox="0 0 22 24"><path d="M7 6V3c0-3 8-3 8 0v3" fill="none" stroke="#fff" strokeWidth="1.5" /><rect y="5" width="22" height="19" rx="1" fill="#fff" /><rect x="6" y="9" width="4.5" height="4.5" fill="#f25022" /><rect x="11.5" y="9" width="4.5" height="4.5" fill="#7fba00" /><rect x="6" y="14.5" width="4.5" height="4.5" fill="#00a4ef" /><rect x="11.5" y="14.5" width="4.5" height="4.5" fill="#ffb900" /></svg>
        </AppIcon>
        <AppIcon>
          <svg width="24" height="20" viewBox="0 0 24 20"><path d="M0 8L12 0l12 8v12H0z" fill="#fff" /><path d="M0 9l24 0L12 15z" fill="#16242c" /></svg>
        </AppIcon>
        <AppIcon>
          <svg width="22" height="26" viewBox="0 0 22 26"><rect x="1" y="0" width="17" height="25" rx="1" fill="#7ea6d8" /><path d="M1 6h17M1 12h17M1 18h17M9 0v25" stroke="#cfe0f4" /><circle cx="16" cy="19" r="6" fill="#13b53c" /><path d="M14 16v6l5-3z" fill="#fff" /></svg>
        </AppIcon>
        <AppIcon>
          <svg width="24" height="26" viewBox="0 0 24 26" fill="none"><ellipse cx="12" cy="13" rx="9" ry="11" stroke="#e0141e" strokeWidth="5" /></svg>
        </AppIcon>
        <AppIcon>
          <svg width="26" height="24" viewBox="0 0 26 24"><circle cx="17" cy="4" r="3.5" fill="#7b83eb" /><rect x="14" y="8" width="11" height="11" rx="4" fill="#7b83eb" /><circle cx="10" cy="3.5" r="3" fill="#5059c9" /><rect x="5" y="7" width="14" height="15" rx="5" fill="#5059c9" /><rect x="0" y="6" width="13" height="13" rx="1" fill="#464eb8" /><path d="M3 9h7M6.5 9v7" stroke="#fff" strokeWidth="1.8" /></svg>
        </AppIcon>
        <AppIcon $bg="#3d4a52" $line="#76b9ed">
          <svg width="24" height="24" viewBox="0 0 24 24"><rect width="24" height="24" fill="#f4f4f4" /><svg x="2" y="2" width="20" height="20" viewBox="0 0 16 16"><TableauLogo size={16} /></svg></svg>
        </AppIcon>
        <AppIcon $line="#76b9ed">
          <svg width="24" height="24" viewBox="0 0 24 24"><rect width="24" height="24" fill="#c8141b" /><path d="M4 19c4-3 6-9 6-13 0-2 2-2 2 0 0 5 3 9 8 10-5 0-10 1-13 4-1 1-3 0-3-1z" fill="none" stroke="#fff" strokeWidth="1.4" /></svg>
        </AppIcon>
        <AppIcon $bg="#9c5d24" $line="#f58220">
          <svg width="24" height="24" viewBox="0 0 24 24"><path d="M2 22l1.5-5.500A10.500 10.500 0 1 1 7.500 20.500z" fill="#fff" /><path d="M4.300 19.700l1-3.500A8.700 8.700 0 1 1 8 18.800z" fill="#25b04a" /><path d="M8.500 7c-1 1-1 3 1 6s4.500 4 6 3.500 2-1.500 1.500-2l-2-1-1 1c-1 0-3-2-3.500-3.500l1-1-1-2.500z" fill="#fff" /></svg>
        </AppIcon>
      </AppIcons>
      <Tray>
        <TrayItem $w={44}><I w={16} h={16} stroke="#eee" sw={1.1}><circle cx="11" cy="3.5" r="2.5" /><circle cx="5" cy="7" r="2.5" /><path d="M1 15c0-3 1.500-5 4-5s3.500 2 4 5M9.500 7c3 0 5 1.500 5.500 4" /></I></TrayItem>
        <TrayItem $w={28}><I w={14} h={8} stroke="#eee" sw={1.2}><path d="M1 7l6-6 6 6" /></I></TrayItem>
        <TrayItem $w={20}><I w={17} h={11} stroke="#eee" sw={1}><path d="M1.5 0v3M4.5 0v3M0 3h6v3a2 2 0 0 1-2 2H2a2 2 0 0 1-2-2zM3 8v3M7 2h9v8H6" /><path d="M9 4h3v4H9z" fill="#eee" /></I></TrayItem>
        <TrayItem $w={26}><I w={16} h={12} stroke="#eee" sw={1}><path d="M1 4h2l4-3v10L3 8H1zM10 4l4 4M14 4l-4 4" /></I></TrayItem>
        <TrayItem $w={22}><I w={14} h={14} stroke="#888" sw={1}><path d="M2 9c2.500-2.500 5-3.500 8-3.500M5 12c1.500-1.500 3-2.300 5-2.300M4 6.500C6 4 9 2.500 12 2.500" /><path d="M11 12.500v1" stroke="#aaa" strokeWidth="1.5" /><path d="M2 0v4M0 2h4M.6.6l2.800 2.800M3.400.6L.6 3.400" stroke="#eee" strokeWidth=".8" /></I></TrayItem>
        <TrayItem $w={38}>ENG</TrayItem>
        <Clock><span>23:47</span><span>18-04-2023</span></Clock>
        <TrayItem $w={34}><I w={17} h={16} stroke="#eee" sw={1.1}><path d="M.5.5h16v12h-5l-3 3-3-3h-5z" /></I></TrayItem>
      </Tray>
    </Taskbar>
  </Page>
);

export default App;
